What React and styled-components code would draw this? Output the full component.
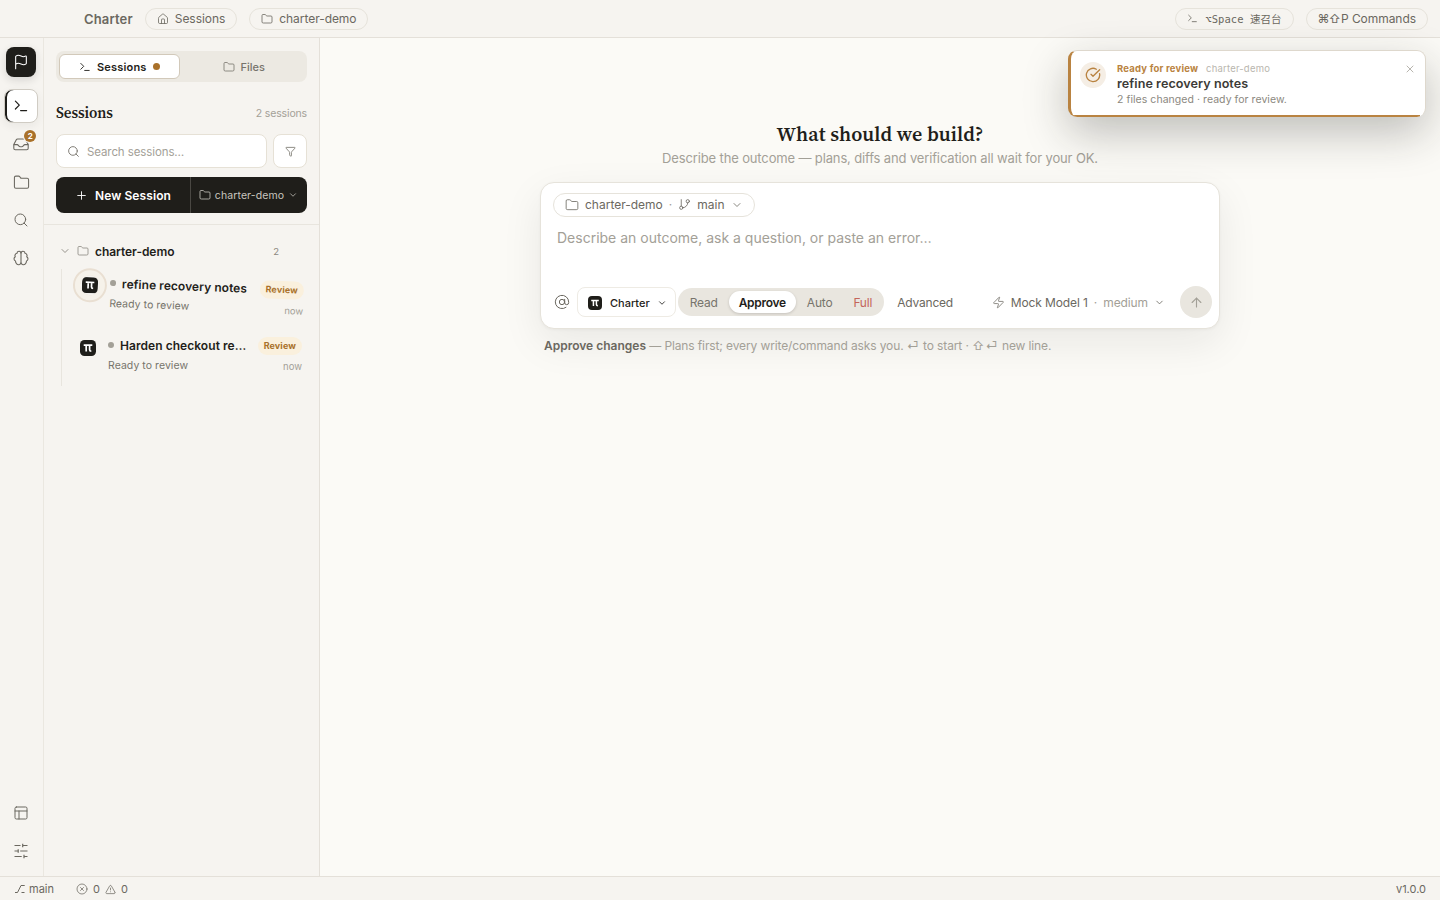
import React from 'react';
import styled, { createGlobalStyle, css } from 'styled-components';
import {
  Folder, House, Flag, Search, Funnel, Plus, ChevronDown, GitBranch,
  AtSign, Zap, ArrowUp, X, CircleCheckBig, CircleX, TriangleAlert, PanelsTopLeft,
} from 'lucide-react';

const Global = createGlobalStyle`
  * { box-sizing: border-box; }
  html, body, #root { height: 100%; }
  body {
    margin: 0;
    background: #fbfaf6;
    color: #1f1e1a;
    font-family: Inter, "Noto Sans CJK SC", sans-serif;
    font-size: 12px;
    overflow: hidden;
  }
  button { font: inherit; color: inherit; margin: 0; }
  svg { flex: none; display: block; }
`;

const Shell = styled.div`
  height: 900px;
  width: 1440px;
  display: grid;
  grid-template-rows: 38px 1fr 24px;
`;

const TopBar = styled.header`
  display: flex;
  align-items: center;
  gap: 12px;
  padding: 0 12px 0 84px;
  background: #f6f4f0;
  border-bottom: 1px solid #e4e0d9;
`;

const Brand = styled.span`
  font-size: 13px;
  font-weight: 600;
  color: #6b6860;
  letter-spacing: 0.15px;
  padding-top: 1px;
`;

const Crumb = styled.button`
  display: flex;
  align-items: center;
  gap: 6px;
  height: 22px;
  padding: 0 11px;
  border: 1px solid #e6e3db;
  border-radius: 11px;
  background: transparent;
  color: #6b6860;
  font-size: 12px;
  letter-spacing: -0.05px;
  white-space: nowrap;
  ${({ $mono }) => $mono && css`
    gap: 7px;
    font-family: "DejaVu Sans Mono", "Noto Sans CJK SC", monospace;
    font-size: 10.5px;
    letter-spacing: 0.05px;
  `}
`;

const Keys = styled.span`
  letter-spacing: -1px;
  margin-right: -5px;
`;

const Spacer = styled.div`
  flex: 1;
`;

const Body = styled.div`
  display: grid;
  grid-template-columns: 44px 276px 1fr;
  min-height: 0;
`;

const Rail = styled.nav`
  display: flex;
  flex-direction: column;
  align-items: center;
  gap: 4px;
  padding: 9px 0.5px 8px 0;
  background: #f6f4f0;
  border-right: 1px solid #eae7e0;
`;

const Logo = styled.div`
  width: 30px;
  height: 30px;
  margin-bottom: 8px;
  display: grid;
  place-items: center;
  border-radius: 8px;
  color: #fff;
  background: #1f1e1a;
  box-shadow: 0 3px 8px rgba(31, 30, 26, 0.14);
`;

const RailButton = styled.button`
  position: relative;
  width: 34px;
  height: 34px;
  display: grid;
  place-items: center;
  padding: 0;
  border: 1px solid transparent;
  border-radius: 8px;
  background: transparent;
  color: #6b6860;
  ${({ $active }) => $active && css`
    color: #1f1e1a;
    background: #fff;
    border-color: #d0ccc4;
    box-shadow: inset 2px 0 0 #1f1e1a, 0 3px 10px rgba(31, 30, 26, 0.06);
  `}
`;

const Badge = styled.span`
  position: absolute;
  top: 2px;
  right: 1px;
  width: 12px;
  height: 12px;
  border-radius: 6px;
  background: #a9712a;
  box-shadow: 0 0 0 1px #f6f4f0;
  color: #fff;
  font-size: 8px;
  font-weight: 700;
  line-height: 12px;
  text-align: center;
`;

const Sidebar = styled.aside`
  background: #f6f4f0;
  border-right: 1px solid #e4e0d9;
`;

const SidebarTop = styled.div`
  height: 187px;
  padding: 13px 12px 0;
  border-bottom: 1px solid #e8e5de;
`;

const Tabs = styled.div`
  display: grid;
  grid-template-columns: 1fr 1fr;
  gap: 4px;
  height: 31px;
  padding: 3px;
  border-radius: 8px;
  background: #ece9e2;
`;

const Tab = styled.button`
  display: flex;
  align-items: center;
  justify-content: center;
  gap: 6px;
  border: 1px solid ${({ $active }) => ($active ? '#d2c9ba' : 'transparent')};
  border-radius: 6px;
  background: ${({ $active }) => ($active ? '#fff' : 'transparent')};
  color: ${({ $active }) => ($active ? '#1f1e1a' : '#77746c')};
  font-size: 11px;
  font-weight: ${({ $active }) => ($active ? 600 : 500)};
  letter-spacing: ${({ $active }) => ($active ? '0.2px' : 0)};
`;

const Dot = styled.i`
  flex: none;
  width: ${({ $size }) => $size}px;
  height: ${({ $size }) => $size}px;
  border-radius: 50%;
  background: ${({ $color }) => $color};
`;

const PanelHead = styled.div`
  display: flex;
  align-items: center;
  justify-content: space-between;
  height: 20px;
  margin-top: 21px;
  color: #a3a097;
  font-size: 10.5px;
  letter-spacing: -0.15px;
`;

const PanelTitle = styled.h2`
  margin: 0;
  font: 600 15px/18px "Source Serif 4", "Liberation Serif", serif;
  letter-spacing: -0.1px;
  color: #1f1e1a;
`;

const SearchRow = styled.div`
  display: grid;
  grid-template-columns: 1fr 34px;
  gap: 6px;
  margin-top: 11px;
`;

const Field = styled.div`
  display: flex;
  align-items: center;
  justify-content: ${({ $center }) => ($center ? 'center' : 'flex-start')};
  gap: 7px;
  height: 34px;
  padding: 0 ${({ $center }) => ($center ? 0 : 10)}px;
  border: 1px solid #e6e1d6;
  border-radius: 8px;
  background: #fff;
  color: #a3a097;
  font-size: 11.5px;
  letter-spacing: -0.1px;
  svg { color: #77746c; }
  span { padding-top: 2px; }
`;

const NewSession = styled.div`
  display: grid;
  grid-template-columns: 134px 1fr;
  height: 36px;
  margin-top: 9px;
  border-radius: 8px;
  background: #1f1e1a;
  color: #fff;
  font-size: 12px;
  font-weight: 600;
  letter-spacing: 0.1px;
`;

const NewPart = styled.div`
  display: flex;
  align-items: center;
  justify-content: center;
  gap: 7px;
  & + & {
    gap: 4px;
    padding-right: 1px;
    border-left: 1px solid #4a4843;
    color: #c9c6bf;
    font-size: 10.5px;
    font-weight: 400;
  }
`;

const Group = styled.div`
  display: flex;
  align-items: center;
  gap: 6px;
  height: 26px;
  margin-top: 13px;
  padding: 0 40px 0 15px;
  color: #8b8880;
  font-size: 9.5px;
  strong { flex: 1; color: #1f1e1a; font-size: 12px; font-weight: 600; letter-spacing: -0.05px; }
`;

const SessionList = styled.div`
  margin: 5px 0 0 17px;
  height: 117px;
  border-left: 1px solid #e8e5de;
`;

const Session = styled.div`
  display: grid;
  grid-template-columns: 20px 139px 1fr;
  column-gap: 10px;
  height: 62px;
  padding: 6px 17px 0 16px;
  ${({ $moving }) => $moving && css`
    transform: translateX(2px) rotate(2deg);
    transform-origin: 48px 15px;
  `}
`;

const Avatar = styled.div`
  width: 20px;
  height: 20px;
  margin-top: 1px;
  display: grid;
  place-items: center;
  border-radius: 50%;
  ${({ $ring }) => $ring && css`
    box-shadow: 0 0 0 5px #f6f2ea, 0 0 0 7px #e9dfd2;
  `}
`;

const SessionText = styled.div`
  min-width: 0;
  color: #77746c;
  font-size: 10.5px;
  letter-spacing: 0.05px;
`;

const SessionTitle = styled.div`
  display: flex;
  align-items: center;
  gap: 6px;
  height: 16px;
  margin-bottom: 6px;
  color: #1f1e1a;
  span {
    font-size: 12px;
    font-weight: 600;
    white-space: nowrap;
    overflow: hidden;
    text-overflow: ellipsis;
  }
`;

const SessionMeta = styled.div`
  display: flex;
  flex-direction: column;
  align-items: flex-end;
  gap: 6px;
  color: #a3a097;
  font-size: 9.5px;
`;

const Pill = styled.span`
  height: 18px;
  padding: 0 6px;
  border-radius: 9px;
  background: #faf0dd;
  color: #a9712a;
  font-size: 9px;
  font-weight: 700;
  letter-spacing: 0.1px;
  line-height: 18px;
`;

const Main = styled.main`
  display: flex;
  flex-direction: column;
  align-items: center;
  background: #fbfaf6;
`;

const Heading = styled.h1`
  margin: 84px 0 0;
  font: 600 20px/24px "Source Serif 4", "Liberation Serif", serif;
  letter-spacing: 0.1px;
`;

const Lead = styled.p`
  margin: 4px 0 15px;
  color: #a3a097;
  font-size: 13px;
  letter-spacing: -0.14px;
  line-height: 17px;
`;

const Composer = styled.section`
  display: flex;
  flex-direction: column;
  width: 680px;
  height: 147px;
  padding: 10px 7px 10px 12px;
  border: 1px solid #e6e3db;
  border-radius: 14px;
  background: #fff;
  box-shadow: 0 14px 40px rgba(31, 30, 26, 0.08), 0 1px 3px rgba(31, 30, 26, 0.04);
`;

const Context = styled(Crumb)`
  align-self: flex-start;
  height: 24px;
  padding-bottom: 1px;
  border-radius: 12px;
  letter-spacing: 0;
  span { color: #a3a097; }
`;

const Prompt = styled.div`
  flex: 1;
  padding: 11px 4px 0;
  color: #a3a097;
  font-size: 14px;
  line-height: 20px;
`;

const Tools = styled.div`
  display: flex;
  align-items: center;
  height: 32px;
  padding-left: 1px;
  color: #6b6860;
`;

const Agent = styled.button`
  display: flex;
  align-items: center;
  gap: 8px;
  height: 30px;
  margin-left: 7px;
  padding: 1px 8px 0 10px;
  border: 1px solid #eeebe4;
  border-radius: 8px;
  background: #fff;
  color: #1f1e1a;
  font-size: 11px;
  font-weight: 500;
  svg + svg, svg:last-child { margin-left: -1px; }
`;

const Modes = styled.div`
  display: flex;
  align-items: center;
  gap: 1px;
  height: 28px;
  margin-left: 2px;
  padding: 2px;
  border-radius: 14px;
  background: #e9e6df;
`;

const Mode = styled.button`
  height: 22px;
  padding: 0 10px;
  border: 0;
  border-radius: 11px;
  background: transparent;
  font-size: 12px;
  letter-spacing: -0.2px;
  color: ${({ $danger }) => ($danger ? '#c4655a' : '#77746c')};
  ${({ $active }) => $active && css`
    background: #fff;
    color: #1f1e1a;
    font-weight: 600;
    letter-spacing: -0.3px;
    box-shadow: 0 1px 3px rgba(31, 30, 26, 0.18);
  `}
`;

const Advanced = styled.span`
  margin-left: 13px;
  letter-spacing: -0.2px;
`;

const Model = styled.div`
  display: flex;
  align-items: center;
  gap: 6px;
  margin: 0 15px 0 auto;
  letter-spacing: -0.1px;
  em { font-style: normal; color: #a3a097; }
`;

const Send = styled.button`
  width: 32px;
  height: 32px;
  display: grid;
  place-items: center;
  padding: 0;
  border: 0;
  border-radius: 50%;
  background: #e9e6df;
  color: #a3a097;
`;

const Hint = styled.p`
  width: 672px;
  margin: 8px 0 0;
  color: #a3a097;
  font-size: 12px;
  letter-spacing: -0.12px;
  line-height: 18px;
  b { font-weight: 600; color: #6b6860; letter-spacing: 0; }
  span { letter-spacing: 1.2px; }
`;

const Toast = styled.div`
  position: absolute;
  top: 50px;
  left: 1068px;
  width: 358px;
  height: 67px;
  display: flex;
  gap: 11px;
  padding: 11px 9px 0 9px;
  border: 1px solid #ded8cd;
  border-bottom-width: 0;
  border-left: 3px solid #b98341;
  border-radius: 9px;
  background: #fff;
  box-shadow: 0 16px 44px rgba(31, 30, 26, 0.27);
  overflow: hidden;
  > svg { margin-top: 1px; }
`;

const ToastIcon = styled.div`
  width: 26px;
  height: 26px;
  display: grid;
  place-items: center;
  border-radius: 50%;
  background: #f5eee5;
  color: #b98341;
`;

const ToastText = styled.div`
  flex: 1;
  color: #8b8880;
  font-size: 10.5px;
  letter-spacing: 0.05px;
  line-height: 15px;
  div { font-size: 9.5px; color: #b9b6ae; line-height: 14px; letter-spacing: 0.2px; }
  div b { margin-right: 5px; color: #b98341; }
  strong {
    display: block;
    color: #3c3b37;
    font-size: 12.6px;
    font-weight: 600;
    line-height: 16px;
  }
`;

const ToastTimer = styled.div`
  position: absolute;
  left: 0;
  right: 5px;
  bottom: 0;
  height: 2px;
  background: #b98341;
`;

const StatusBar = styled.footer`
  display: flex;
  align-items: center;
  gap: 4px;
  padding: 1px 14px 0 15px;
  border-top: 1px solid #e4e0d9;
  background: #f6f4f0;
  color: #6b6860;
  font-size: 11px;
`;

const Problems = styled.span`
  display: flex;
  align-items: center;
  gap: 5px;
  margin-left: 18px;
`;

const Terminal = ({ size = 16 }) => (
  <svg width={size} height={size} viewBox="0 0 16 16" fill="none" stroke="currentColor" strokeWidth="1.2" strokeLinecap="round" strokeLinejoin="round">
    <path d="M2.4 3.2 6.3 7.1 2.4 11M7.6 12.6h6" />
  </svg>
);

const Tray = () => (
  <svg width="16" height="16" viewBox="0 0 16 16" fill="none" stroke="currentColor" strokeWidth="1.1" strokeLinejoin="round">
    <path d="M4.6 3h6.8q.9 0 1.3.8l2.5 4.8v3.6q0 1.5-1.5 1.5H2.3q-1.5 0-1.5-1.5V8.6l2.5-4.8Q3.700 3 4.6 3z" />
    <path d="M.8 8.6h3.4c1.2 0 1.5 2.2 3 2.2h1.6c1.500 0 1.800-2.200 3-2.200h3.400" />
  </svg>
);

const Brain = () => (
  <svg width="16" height="16" viewBox="0 0 16 16" fill="none" stroke="currentColor" strokeWidth="1.1" strokeLinejoin="round">
    <path d="M8 3.4C8 .6 4.2.4 4.1 3.3 2.1 3.6 1.5 5.500 2.300 6.700.5 7.800.700 10.400 2.500 11 2.500 13.400 4.300 14.900 6 14.700 7.300 14.500 8 13.600 8 12.500z" />
    <path d="M8 3.4C8 .6 11.8.4 11.9 3.3 13.9 3.6 14.5 5.500 13.700 6.700 15.500 7.800 15.300 10.400 13.500 11 13.500 13.400 11.700 14.900 10 14.700 8.700 14.500 8 13.600 8 12.500" />
  </svg>
);

const Sliders = () => (
  <svg width="16" height="16" viewBox="0 0 16 16" fill="none" stroke="currentColor" strokeWidth="1.2">
    <path d="M1.5 2.5h6M9.7 2.5h4.8M9.7.7v3.6M1.5 8h3.6M7.2 8h7.3M5.2 6.2v3.6M1.5 13.5h7.2M11 13.5h3.5M11 11.7v3.6" />
  </svg>
);

const Branch = () => (
  <svg width="10" height="10" viewBox="0 0 10 10" fill="none" stroke="currentColor" strokeWidth="1">
    <path d="M0 8.5h2.5L6 1.5h3.7M6.5 8.5h3" />
  </svg>
);

const PiMark = ({ size = 16 }) => (
  <svg width={size} height={size} viewBox="0 0 16 16">
    <rect width="16" height="16" rx="4.5" fill="#1f1e1a" />
    <path d="M3.7 5.1h8.6M6.2 5.1v6.3M9.6 5.1v4.6q0 1.4 1.7 1.4" fill="none" stroke="#fff" strokeWidth="1.7" />
  </svg>
);

const sessions = [
  { title: 'refine recovery notes', moving: true },
  { title: 'Harden checkout re…', moving: false },
];

const modes = ['Read', 'Approve', 'Auto', 'Full'];

const App = () => {
  return (
    <>
      <Global />
      <Shell>
        <TopBar>
          <Brand>Charter</Brand>
          <Crumb><House size={12} strokeWidth={1.6} />Sessions</Crumb>
          <Crumb><Folder size={12} strokeWidth={1.6} />charter-demo</Crumb>
          <Spacer />
          <Crumb $mono><Terminal size={11} />⌥Space 速召台</Crumb>
          <Crumb><Keys>⌘⇧</Keys>P Commands</Crumb>
        </TopBar>
        <Body>
          <Rail>
            <Logo><Flag size={16} strokeWidth={1.6} /></Logo>
            <RailButton $active><Terminal /></RailButton>
            <RailButton><Tray /><Badge>2</Badge></RailButton>
            <RailButton><Folder size={17} strokeWidth={1.5} /></RailButton>
            <RailButton><Search size={16} strokeWidth={1.5} /></RailButton>
            <RailButton><Brain /></RailButton>
            <Spacer />
            <RailButton><PanelsTopLeft size={16} strokeWidth={1.5} /></RailButton>
            <RailButton><Sliders /></RailButton>
          </Rail>
          <Sidebar>
            <SidebarTop>
              <Tabs>
                <Tab $active><Terminal size={12} />Sessions<Dot $size={7} $color="#a9712a" /></Tab>
                <Tab><Folder size={12} strokeWidth={1.6} />Files</Tab>
              </Tabs>
              <PanelHead><PanelTitle>Sessions</PanelTitle>2 sessions</PanelHead>
              <SearchRow>
                <Field><Search size={13} strokeWidth={1.7} /><span>Search sessions…</span></Field>
                <Field $center><Funnel size={11} strokeWidth={1.8} /></Field>
              </SearchRow>
              <NewSession>
                <NewPart><Plus size={13} strokeWidth={1.7} />New Session</NewPart>
                <NewPart><Folder size={12} strokeWidth={1.6} />charter-demo<ChevronDown size={10} strokeWidth={1.8} /></NewPart>
              </NewSession>
            </SidebarTop>
            <Group>
              <ChevronDown size={12} strokeWidth={1.8} />
              <Folder size={12} strokeWidth={1.6} />
              <strong>charter-demo</strong>2
            </Group>
            <SessionList>
              {sessions.map((s) => (
                <Session key={s.title} $moving={s.moving}>
                  <Avatar $ring={s.moving}><PiMark /></Avatar>
                  <SessionText>
                    <SessionTitle><Dot $size={6} $color="#a3a097" /><span>{s.title}</span></SessionTitle>
                    Ready to review
                  </SessionText>
                  <SessionMeta><Pill>Review</Pill>now</SessionMeta>
                </Session>
              ))}
            </SessionList>
          </Sidebar>
          <Main>
            <Heading>What should we build?</Heading>
            <Lead>Describe the outcome — plans, diffs and verification all wait for your OK.</Lead>
            <Composer>
              <Context>
                <Folder size={14} strokeWidth={1.4} />charter-demo<span>·</span>
                <GitBranch size={13} strokeWidth={1.5} />main<ChevronDown size={12} strokeWidth={1.6} />
              </Context>
              <Prompt>Describe an outcome, ask a question, or paste an error…</Prompt>
              <Tools>
                <AtSign size={16} strokeWidth={1.5} />
                <Agent><PiMark size={14} />Charter<ChevronDown size={10} strokeWidth={2} /></Agent>
                <Modes>
                  {modes.map((m) => (
                    <Mode key={m} $active={m === 'Approve'} $danger={m === 'Full'}>{m}</Mode>
                  ))}
                </Modes>
                <Advanced>Advanced</Advanced>
                <Model>
                  <Zap size={13} strokeWidth={1.4} />Mock Model 1 <em>·</em> <em>medium</em>
                  <ChevronDown size={11} strokeWidth={1.8} />
                </Model>
                <Send><ArrowUp size={15} strokeWidth={1.8} /></Send>
              </Tools>
            </Composer>
            <Hint>
              <b>Approve changes</b> — Plans first; every write/command asks you. <span>⏎</span> to start · <span>⇧⏎</span> new line.
            </Hint>
          </Main>
        </Body>
        <StatusBar>
          <Branch />main
          <Problems>
            <CircleX size={12} strokeWidth={1.5} />0
            <TriangleAlert size={11} strokeWidth={1.6} />0
          </Problems>
          <Spacer />
          v1.0.0
        </StatusBar>
      </Shell>
      <Toast>
        <ToastIcon><CircleCheckBig size={16} strokeWidth={2} /></ToastIcon>
        <ToastText>
          <div><b>Ready for review</b> charter-demo</div>
          <strong>refine recovery notes</strong>
          2 files changed · ready for review.
        </ToastText>
        <X size={12} strokeWidth={1.8} color="#b0ada5" />
        <ToastTimer />
      </Toast>
    </>
  );
};

export default App;
